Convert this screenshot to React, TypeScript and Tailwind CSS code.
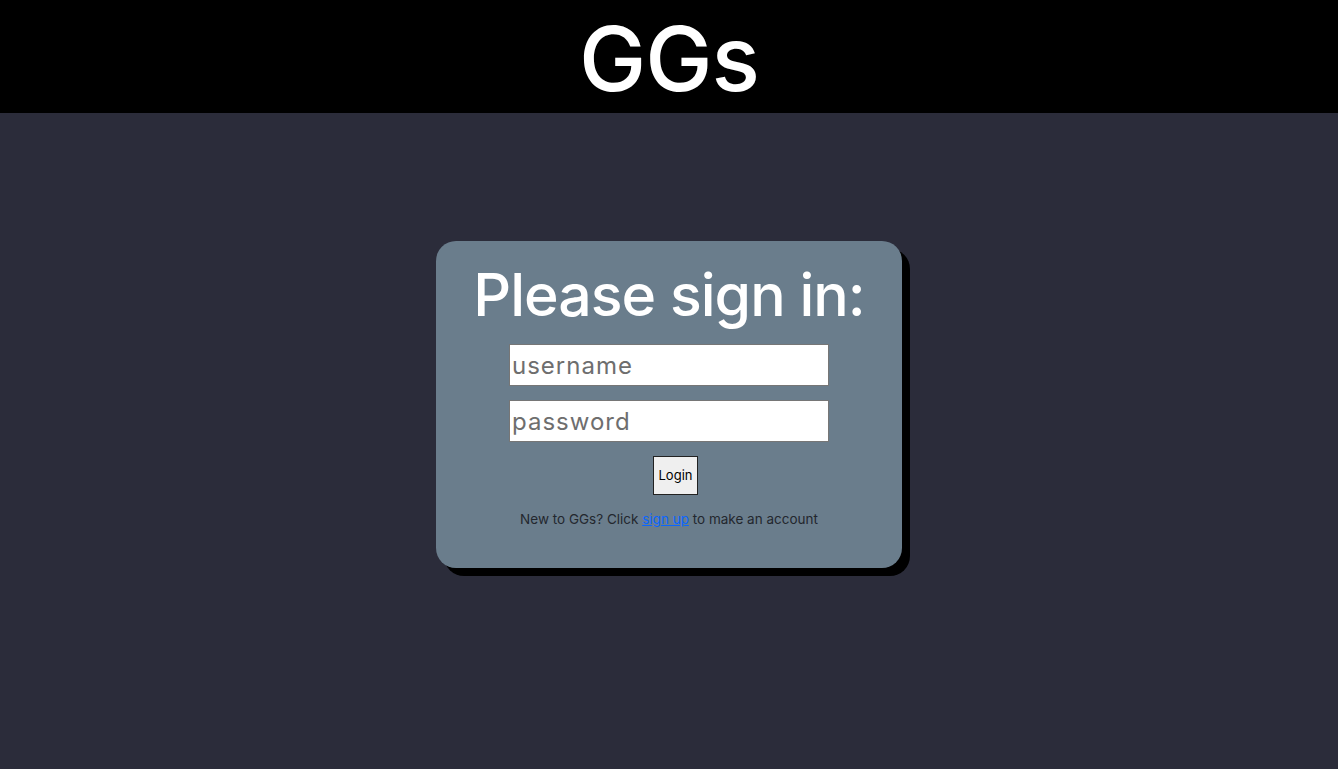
import React, { useState } from 'react';

export default function App() {
  const [username, setUsername] = useState('');
  const [password, setPassword] = useState('');

  return (
    <div className="min-h-screen bg-[#2b2c3a] font-['Inter',sans-serif]">
      {/* Header */}
      <header className="h-[113px] bg-black flex items-center justify-center overflow-hidden">
        <h1 className="text-white text-[90px] leading-[113px] font-medium tracking-[-1px] pt-[3px]">GGs</h1>
      </header>

      {/* Login card */}
      <main className="flex justify-center pt-[128px]">
        <div className="w-[466px] h-[327px] bg-[#6a7d8c] rounded-[20px] shadow-[8px_8px_0_0_#000] flex flex-col items-center pt-[22px]">
          <h2 className="text-white text-[59px] leading-[64px] font-medium tracking-[-1px]">Please sign in:</h2>
          <form
            className="flex flex-col items-center mt-[17px]"
            onSubmit={(e) => e.preventDefault()}
          >
            <input
              type="text"
              value={username}
              onChange={(e) => setUsername(e.target.value)}
              placeholder="username"
              className="w-[320px] h-[42px] bg-white border border-[#767676] px-[2px] text-[24px] text-black placeholder:text-[#6e6e6e] tracking-[1px] outline-none"
            />
            <input
              type="password"
              value={password}
              onChange={(e) => setPassword(e.target.value)}
              placeholder="password"
              className="w-[320px] h-[42px] mt-[14px] bg-white border border-[#767676] px-[2px] text-[24px] text-black placeholder:text-[#6e6e6e] tracking-[1px] outline-none"
            />
            <button
              type="submit"
              className="mt-[14px] ml-[13px] w-[45px] h-[39px] bg-[#efefef] border border-[#222] text-[13px] text-black"
            >
              Login
            </button>
          </form>
          <p className="mt-[14px] text-[13.5px] text-[#23272e]">
            New to GGs? Click{' '}
            <a href="#" className="text-[#0a66ff] underline">sign up</a>{' '}
            to make an account
          </p>
        </div>
      </main>
    </div>
  );
}
